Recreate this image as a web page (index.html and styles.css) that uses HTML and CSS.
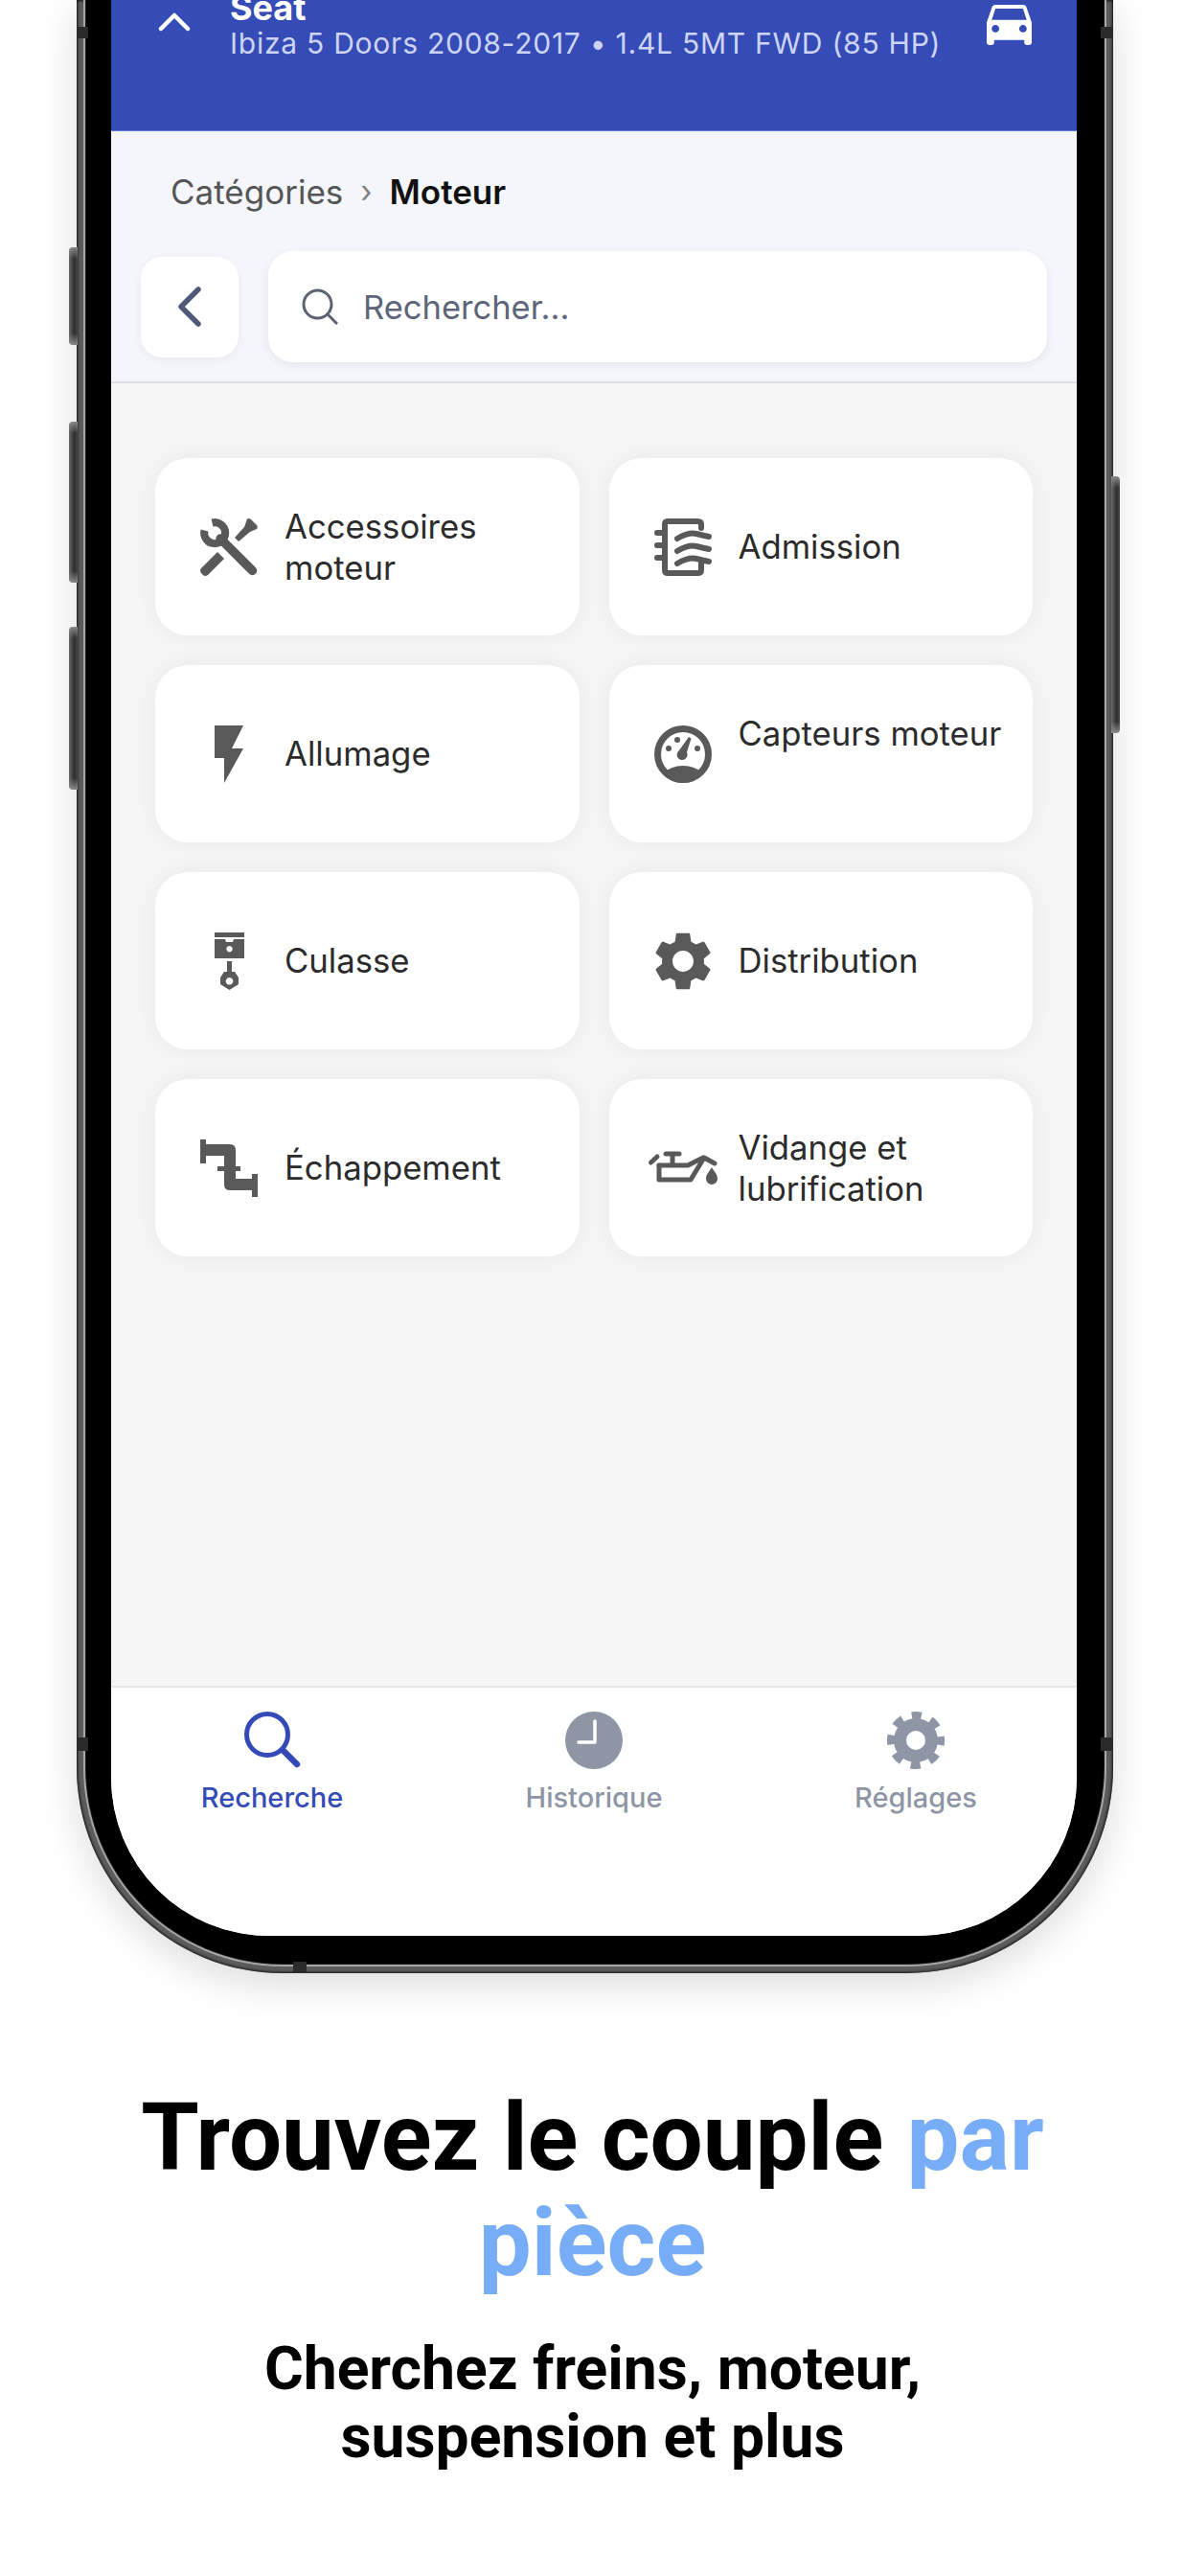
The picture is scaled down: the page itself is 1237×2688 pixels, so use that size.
FILE: index.html
```html
<!DOCTYPE html>
<html lang="fr">
<head>
    <meta charset="UTF-8">
    <meta name="viewport" content="width=device-width, initial-scale=1.0">
    <title>Trouvez le couple par pièce</title>
    <link rel="stylesheet" href="styles.css">
</head>
<body>
    <div class="phone">
        <span class="side-btn side-btn-mute"></span>
        <span class="side-btn side-btn-up"></span>
        <span class="side-btn side-btn-down"></span>
        <span class="side-btn side-btn-power"></span>
        <span class="band band-left-top"></span>
        <span class="band band-right-top"></span>
        <span class="band band-left-low"></span>
        <span class="band band-right-low"></span>
        <span class="band band-bottom"></span>

        <div class="phone-edge">
            <div class="phone-bezel">
                <div class="screen">
                    <header class="vehicle">
                        <svg class="vehicle-chevron" viewBox="0 0 34 20"><path d="M3 17 L17 3 L31 17" fill="none" stroke="#ffffff" stroke-width="4.5" stroke-linecap="round" stroke-linejoin="round"/></svg>
                        <div class="vehicle-text">
                            <div class="vehicle-make">Seat</div>
                            <div class="vehicle-model">Ibiza 5 Doors 2008-2017 • 1.4L 5MT FWD (85 HP)</div>
                        </div>
                        <svg class="vehicle-car" viewBox="3 5 18 16"><path fill="#ffffff" d="M18.92 6.01C18.72 5.42 18.16 5 17.5 5h-11c-.66 0-1.21.42-1.42 1.01L3 12v8c0 .55.45 1 1 1h1c.55 0 1-.45 1-1v-1h12v1c0 .55.45 1 1 1h1c.55 0 1-.45 1-1v-8l-2.08-5.99zM6.5 16c-.83 0-1.5-.67-1.5-1.5S5.67 13 6.5 13s1.5.67 1.5 1.5S7.33 16 6.5 16zm11 0c-.83 0-1.5-.67-1.5-1.5s.67-1.5 1.5-1.5 1.5.67 1.5 1.5-.67 1.5-1.5 1.5zM5 11l1.5-4.5h11L19 11H5z"/></svg>
                    </header>

                    <section class="topbar">
                        <div class="crumbs">
                            <span class="crumb">Catégories</span>
                            <span class="crumb-sep">›</span>
                            <span class="crumb-current">Moteur</span>
                        </div>
                        <div class="toolbar">
                            <div class="back-btn">
                                <svg viewBox="0 0 26 44" class="back-icon"><path d="M22 4 L4 22 L22 40" fill="none" stroke="#505a78" stroke-width="5.5" stroke-linecap="round" stroke-linejoin="round"/></svg>
                            </div>
                            <div class="search-box">
                                <svg viewBox="0 0 38 38" class="search-icon"><circle cx="16.5" cy="16.5" r="14.5" fill="none" stroke="#5b6270" stroke-width="3"/><path d="M27 27 L37 37" stroke="#5b6270" stroke-width="3"/></svg>
                                <span class="search-text">Rechercher...</span>
                            </div>
                        </div>
                    </section>

                    <section class="content">
                        <div class="card">
                            <div class="card-icon">
                                <svg viewBox="0 0 60 60" class="icon">
                                    <path d="M4.5 12.5 A11 11 0 1 0 12.5 4.5" fill="none" stroke="#595959" stroke-width="8"/>
                                    <path d="M21 21 L54.500 54.500" stroke="#595959" stroke-width="9.500" stroke-linecap="round"/>
                                    <path d="M49 0.500 Q51 -0.500 53 1 L59 7 Q60.500 9 59 11 L52 14 L40 24 L36 20 L46 9 Z" fill="#595959"/>
                                    <path d="M1 52 L18 35 L25 42 L8 59 Q5 61 3 59 L1 57 Q-1 54 1 52 Z" fill="#595959"/>
                                </svg>
                            </div>
                            <span class="card-label">Accessoires moteur</span>
                        </div>
                        <div class="card">
                            <div class="card-icon">
                                <svg viewBox="0 0 60 60" class="icon" fill="none" stroke="#595959" stroke-width="6" stroke-linecap="round">
                                    <path d="M49 10 V6 Q49 3 45 3 H14 Q11 3 11 6 V54 Q11 57 14 57 H45 Q49 57 49 54 V47"/>
                                    <path d="M3 15 H11 M3 28 H11 M3 41 H11"/>
                                    <path d="M24 21 Q36 14 44 16 Q52 18 57 19"/>
                                    <path d="M24 34 Q36 27 44 29 Q52 31 57 32"/>
                                    <path d="M24 47 Q36 40 44 42 Q52 44 57 45"/>
                                </svg>
                            </div>
                            <span class="card-label">Admission</span>
                        </div>
                        <div class="card">
                            <div class="card-icon">
                                <svg viewBox="0 0 60 60" class="icon"><path fill="#595959" d="M15 0 H45 L33 24 H45 L25 60 V34 H15 Z"/></svg>
                            </div>
                            <span class="card-label">Allumage</span>
                        </div>
                        <div class="card">
                            <div class="card-icon">
                                <svg viewBox="0 0 60 60" class="icon" fill="#595959">
                                    <circle cx="30" cy="30" r="26.500" fill="none" stroke="#595959" stroke-width="7"/>
                                    <path d="M9 50 Q18 42 30 42 Q42 42 51 50 Q42 60 30 60 Q18 60 9 50 Z"/>
                                    <circle cx="15" cy="24" r="3"/>
                                    <circle cx="24" cy="15" r="3"/>
                                    <circle cx="45" cy="24" r="3"/>
                                    <path d="M36 12 L38.500 13.500 L34 28 A5.500 5.500 0 1 1 26 26 Z"/>
                                </svg>
                            </div>
                            <span class="card-label card-label-top">Capteurs moteur</span>
                        </div>
                        <div class="card">
                            <div class="card-icon">
                                <svg viewBox="0 0 60 60" class="icon" fill="#595959">
                                    <rect x="15" y="0" width="31" height="5"/>
                                    <path fill-rule="evenodd" d="M15 7 H26 L27 10 H34 L35 7 H46 V27 H15 Z M30.500 14 a3.200 3.200 0 1 0 .01 0 Z"/>
                                    <rect x="28" y="30" width="5" height="15"/>
                                    <path fill-rule="evenodd" d="M25 41 H36 L40 47 V54 L30.500 60 L21 54 V47 Z M30.500 47 a3.800 3.800 0 1 0 .01 0 Z"/>
                                </svg>
                            </div>
                            <span class="card-label">Culasse</span>
                        </div>
                        <div class="card">
                            <div class="card-icon">
                                <svg viewBox="0 0 60 60" class="icon"><path fill="#595959" d="M19.140 12.940c.04-.3.06-.61.06-.94 0-.32-.02-.64-.07-.94l2.030-1.580c.18-.14.23-.41.12-.61l-1.920-3.320c-.12-.22-.37-.29-.59-.22l-2.390.96c-.5-.38-1.030-.7-1.620-.94l-.36-2.540c-.04-.24-.24-.41-.48-.41h-3.840c-.24 0-.43.17-.47.41l-.36 2.540c-.59.24-1.130.57-1.620.94l-2.390-.96c-.22-.08-.47 0-.59.22L2.740 8.870c-.12.21-.08.47.12.61l2.030 1.580c-.05.3-.09.63-.09.94s.02.64.07.94l-2.030 1.580c-.18.14-.23.41-.12.61l1.920 3.320c.12.22.37.29.59.22l2.390-.96c.5.38 1.030.7 1.620.94l.36 2.540c.05.24.24.41.48.41h3.840c.24 0 .44-.17.47-.41l.36-2.540c.59-.24 1.130-.56 1.620-.94l2.390.96c.22.08.47 0 .59-.22l1.920-3.320c.12-.22.07-.47-.12-.61l-2.010-1.580zM12 15.600c-1.980 0-3.600-1.620-3.600-3.600s1.620-3.600 3.600-3.600 3.600 1.620 3.600 3.600-1.620 3.600-3.600 3.600z" transform="translate(-6.600 -6.600) scale(3.050)"/></svg>
                            </div>
                            <span class="card-label">Distribution</span>
                        </div>
                        <div class="card">
                            <div class="card-icon">
                                <svg viewBox="0 0 60 60" class="icon" fill="#595959">
                                    <rect x="0" y="0" width="6" height="25"/>
                                    <path d="M6 5 H31 Q37 5 37 11 V41 H60 V53 H31 Q25 53 25 47 V17 H6 Z"/>
                                    <rect x="18" y="28" width="24" height="5"/>
                                    <rect x="54" y="36" width="6" height="24"/>
                                </svg>
                            </div>
                            <span class="card-label">Échappement</span>
                        </div>
                        <div class="card">
                            <div class="card-icon">
                                <svg viewBox="0 0 72 36" class="icon-wide">
                                    <g fill="none" stroke="#595959" stroke-width="5" stroke-linecap="round" stroke-linejoin="round">
                                        <path d="M11 15 V30 H44 L58 7 L69 13"/>
                                        <path d="M11 15 H41 L57 7"/>
                                        <path d="M25 3 V14 M18 3 H32"/>
                                        <path d="M2.500 12 L9 6"/>
                                    </g>
                                    <path fill="#595959" d="M66 17 C68 21 72 24 72 29 A6 6 0 0 1 60 29 C60 24 64 21 66 17 Z"/>
                                </svg>
                            </div>
                            <span class="card-label">Vidange et lubrification</span>
                        </div>
                    </section>

                    <nav class="tabbar">
                        <div class="tab tab-active">
                            <svg viewBox="0 0 60 60" class="tab-icon"><circle cx="25" cy="24" r="21.500" fill="none" stroke="#344bb7" stroke-width="5"/><path d="M41 40 L56 55" stroke="#344bb7" stroke-width="6.500" stroke-linecap="round"/></svg>
                            <span class="tab-label">Recherche</span>
                        </div>
                        <div class="tab">
                            <svg viewBox="0 0 60 60" class="tab-icon"><circle cx="30" cy="30" r="30" fill="#8e95a5"/><path d="M31 10 V32 H14" fill="none" stroke="#ffffff" stroke-width="3.500" stroke-linecap="round" stroke-linejoin="round"/></svg>
                            <span class="tab-label">Historique</span>
                        </div>
                        <div class="tab">
                            <svg viewBox="0 0 60 60" class="tab-icon">
                                <circle cx="30" cy="30" r="16.500" fill="none" stroke="#8e95a5" stroke-width="13"/>
                                <circle cx="30" cy="30" r="25.500" fill="none" stroke="#8e95a5" stroke-width="9" stroke-dasharray="10 10.030" stroke-dashoffset="5"/>
                            </svg>
                            <span class="tab-label">Réglages</span>
                        </div>
                    </nav>
                </div>
            </div>
        </div>
    </div>

    <section class="promo">
        <h1>Trouvez le couple <span class="accent">par pièce</span></h1>
        <h2>Cherchez freins, moteur, suspension et plus</h2>
    </section>
</body>
</html>
```
FILE: styles.css
```css
* {
    box-sizing: border-box;
}

html, body {
    margin: 0;
    padding: 0;
    height: 2688px;
    overflow: hidden;
    background-color: #ffffff;
}

body {
    font-family: 'Inter', 'Liberation Sans', sans-serif;
}

/* phone frame */
.phone {
    position: relative;
    width: 1082px;
    margin-left: 80px;
    padding: 0 7px 7px 7px;
    background-color: #5c5c5c;
    border-radius: 0 0 215px 215px;
    box-shadow: 0 12px 40px rgba(0, 0, 0, 0.14), inset 0 0 3px 1px #111111;
}

.phone-edge {
    padding: 0 3px 3px 3px;
    background-color: #a6a6a6;
    border-radius: 0 0 208px 208px;
}

.phone-bezel {
    padding: 0 28px 29px 26px;
    background-color: #000000;
    border-radius: 0 0 205px 205px;
    box-shadow: 0 0 0 1px #1c1c1c;
}

.side-btn {
    position: absolute;
    width: 9px;
    background:
        linear-gradient(to bottom, #8a8a8a, transparent 12px, transparent calc(100% - 12px), #8a8a8a),
        linear-gradient(to right, #6b6b6b, #2e2e2e 60%, #444444);
}

.side-btn-mute {
    left: -8px;
    top: 258px;
    height: 102px;
    border-radius: 4px 0 0 4px;
}

.side-btn-up {
    left: -8px;
    top: 440px;
    height: 168px;
    border-radius: 4px 0 0 4px;
}

.side-btn-down {
    left: -8px;
    top: 654px;
    height: 170px;
    border-radius: 4px 0 0 4px;
}

.side-btn-power {
    right: -7px;
    top: 497px;
    height: 268px;
    border-radius: 0 4px 4px 0;
}

.band {
    position: absolute;
    z-index: 1;
    background-color: #2b2b2b;
}

.band-left-top {
    left: 0;
    top: 28px;
    width: 12px;
    height: 12px;
}

.band-right-top {
    right: 0;
    top: 28px;
    width: 13px;
    height: 12px;
}

.band-left-low {
    left: 0;
    top: 1813px;
    width: 12px;
    height: 14px;
}

.band-right-low {
    right: 0;
    top: 1813px;
    width: 13px;
    height: 14px;
}

.band-bottom {
    left: 226px;
    bottom: 0;
    width: 14px;
    height: 12px;
}

.screen {
    display: flex;
    flex-direction: column;
    height: 2020px;
    background-color: #ffffff;
    border-radius: 0 0 165px 165px;
    overflow: hidden;
}

/* vehicle header */
.vehicle {
    position: relative;
    display: flex;
    align-items: flex-end;
    flex-shrink: 0;
    height: 137px;
    padding: 0 0 73px 124px;
    background-color: #354bb5;
    border-bottom: 1px solid #6a7dd6;
    color: #ffffff;
}

.vehicle-chevron {
    position: absolute;
    left: 49px;
    top: 13px;
    width: 34px;
    height: 20px;
}

.vehicle-car {
    position: absolute;
    left: 914px;
    top: 5px;
    width: 47px;
    height: 42px;
}

.vehicle-make {
    font-size: 36px;
    font-weight: 700;
    line-height: 38px;
}

.vehicle-model {
    font-size: 30px;
    line-height: 36px;
    color: #cdd5f6;
    letter-spacing: 0.75px;
    white-space: nowrap;
}

/* breadcrumb and search */
.topbar {
    flex-shrink: 0;
    padding: 0 31px 20px 31px;
    background-color: #f4f6fb;
    border-bottom: 2px solid #dcdee2;
}

.crumbs {
    display: flex;
    align-items: center;
    height: 125px;
    padding-left: 31px;
    font-size: 35px;
}

.crumb {
    color: #555555;
}

.crumb-sep {
    margin: 0 18px;
    color: #808080;
    font-size: 32px;
}

.crumb-current {
    color: #111111;
    font-weight: 600;
}

.toolbar {
    display: flex;
    align-items: center;
    gap: 31px;
}

.back-btn {
    display: flex;
    align-items: center;
    justify-content: center;
    flex-shrink: 0;
    width: 102px;
    height: 105px;
    background-color: #ffffff;
    border-radius: 22px;
    box-shadow: 0 2px 8px rgba(0, 0, 0, 0.06);
}

.back-icon {
    width: 26px;
    height: 44px;
}

.search-box {
    display: flex;
    align-items: center;
    flex: 1;
    height: 116px;
    padding-left: 35px;
    background-color: #ffffff;
    border-radius: 26px;
    box-shadow: 0 3px 10px rgba(0, 0, 0, 0.07);
}

.search-icon {
    width: 38px;
    height: 38px;
}

.search-text {
    margin-left: 26px;
    font-size: 34.5px;
    color: #5c6579;
}

/* category cards */
.content {
    flex: 1;
    display: grid;
    grid-template-columns: 1fr 1fr;
    grid-auto-rows: 185px;
    gap: 31px;
    align-content: start;
    padding: 78px 46px 0 46px;
    background-color: #f5f5f5;
}

.card {
    display: flex;
    align-items: center;
    padding-left: 41px;
    background-color: #ffffff;
    border-radius: 34px;
    box-shadow: 0 0 22px rgba(0, 0, 0, 0.05);
}

.card-icon {
    display: flex;
    align-items: center;
    justify-content: center;
    flex-shrink: 0;
    width: 72px;
    margin-right: 22px;
}

.icon {
    width: 60px;
    height: 60px;
    overflow: visible;
}

.icon-wide {
    width: 72px;
    height: 36px;
    overflow: visible;
}

.card-label {
    padding-right: 20px;
    font-size: 34.7px;
    line-height: 43px;
    color: #2b2b2b;
}

.card-label-top {
    min-height: 86px;
    padding-right: 0;
    white-space: nowrap;
}

/* tab bar */
.tabbar {
    display: grid;
    grid-template-columns: 1fr 1fr 1fr;
    flex-shrink: 0;
    height: 261px;
    padding-top: 25px;
    background-color: #ffffff;
    border-top: 2px solid #e4e5e8;
}

.tab {
    display: flex;
    flex-direction: column;
    align-items: center;
    color: #8e95a5;
}

.tab-active {
    color: #344bb7;
}

.tab-icon {
    width: 60px;
    height: 60px;
}

.tab-label {
    margin-top: 12px;
    font-size: 29px;
    font-weight: 500;
    line-height: 36px;
}

/* text under the phone */
.promo {
    padding-top: 117px;
    font-family: 'Roboto', 'Liberation Sans', sans-serif;
    text-align: center;
    color: #000000;
}

.promo h1 {
    max-width: 1000px;
    margin: 0 auto;
    font-size: 97.8px;
    font-weight: 700;
    line-height: 110px;
}

.accent {
    color: #76adf6;
}

.promo h2 {
    max-width: 800px;
    margin: 40px auto 0 auto;
    font-size: 62.4px;
    font-weight: 700;
    line-height: 71px;
}
```
